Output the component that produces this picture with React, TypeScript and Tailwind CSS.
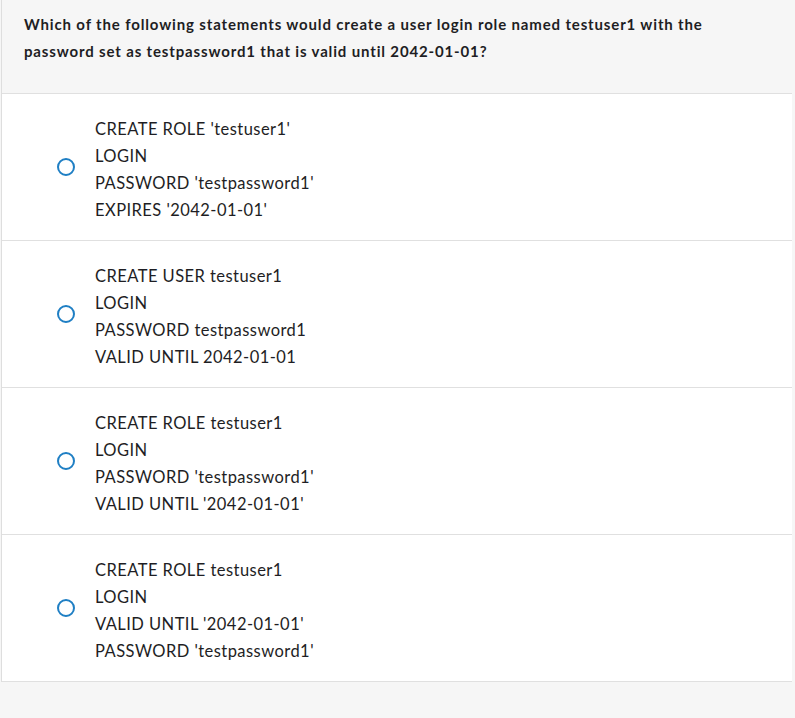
import React from "react";

const options: string[][] = [
  ["CREATE ROLE 'testuser1'", "LOGIN", "PASSWORD 'testpassword1'", "EXPIRES '2042-01-01'"],
  ["CREATE USER testuser1", "LOGIN", "PASSWORD testpassword1", "VALID UNTIL 2042-01-01"],
  ["CREATE ROLE testuser1", "LOGIN", "PASSWORD 'testpassword1'", "VALID UNTIL '2042-01-01'"],
  ["CREATE ROLE testuser1", "LOGIN", "VALID UNTIL '2042-01-01'", "PASSWORD 'testpassword1'"],
];

function Radio() {
  return (
    <span className="block h-[18px] w-[18px] rounded-full border-2 border-[#1f7fc4] bg-white" />
  );
}

export default function App() {
  return (
    <div className="min-h-[718px] bg-[#f6f6f6] font-['Lato','Liberation_Sans',sans-serif] text-[#1e1e24]">
      <div className="ml-[1px] w-[791px] border-l border-[#dedede]">
        <div className="h-[94px] border-b border-[#e0e0e0] bg-[#f6f6f6] pl-[22px] pr-6 pt-[11px]">
          <p className="text-[15px] font-bold leading-[27px] tracking-[0.85px]">
            Which of the following statements would create a user login role named testuser1 with the
            password set as testpassword1 that is valid until 2042-01-01?
          </p>
        </div>
        {options.map((lines, i) => (
          <div
            key={i}
            className="flex h-[147px] items-center border-b border-[#e0e0e0] bg-white pl-[55px]"
          >
            <Radio />
            <div className="ml-[20px] pt-[6px] text-[16.5px] leading-[27px] tracking-[0.45px]">
              {lines.map((l, j) => (
                <div key={j}>{l}</div>
              ))}
            </div>
          </div>
        ))}
      </div>
    </div>
  );
}
